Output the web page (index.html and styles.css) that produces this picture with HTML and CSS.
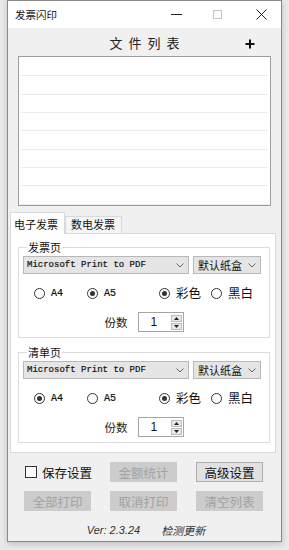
FILE: index.html
```html
<!DOCTYPE html>
<html lang="zh-CN">
<head>
<meta charset="utf-8">
<title>发票闪印</title>
<link rel="stylesheet" href="styles.css">
</head>
<body>
<div class="window">
  <div class="titlebar">
    <span class="title">发票闪印</span>
    <span class="tb-btn tb-min"><svg width="11" height="11" viewBox="0 0 11 11"><line x1="0" y1="5.5" x2="11" y2="5.5" stroke="#222" stroke-width="1"/></svg></span>
    <span class="tb-btn tb-max"><svg width="10" height="10" viewBox="0 0 10 10"><rect x="0.5" y="0.5" width="8" height="8" fill="none" stroke="#c4c4c4" stroke-width="1"/></svg></span>
    <span class="tb-btn tb-close"><svg width="11" height="11" viewBox="0 0 11 11"><path d="M0.5 0.5 L10.5 10.5 M10.5 0.5 L0.5 10.5" stroke="#222" stroke-width="1" fill="none"/></svg></span>
  </div>

  <div class="heading-row">
    <span></span>
    <span class="heading">文件列表</span>
    <span class="plus"><svg width="10" height="10" viewBox="0 0 10 10"><path d="M5 0.5 V9.5 M0.5 5 H9.5" stroke="#111" stroke-width="2" fill="none"/></svg></span>
  </div>

  <div class="filelist">
    <div class="row"></div><div class="row"></div><div class="row"></div><div class="row"></div>
    <div class="row"></div><div class="row"></div><div class="row"></div><div class="row"></div>
  </div>

  <div class="tabs">
    <span class="tab active">电子发票</span>
    <span class="tab">数电发票</span>
  </div>
  <div class="panel">
    <fieldset class="group">
      <legend>发票页</legend>
      <div class="combos">
        <div class="combo combo-printer"><span class="mono">Microsoft Print to PDF</span><svg class="chev" width="8" height="5" viewBox="0 0 8 5"><path d="M0.5 0.5 L4 4 L7.5 0.5" stroke="#666" fill="none"/></svg></div>
        <div class="combo combo-tray"><span>默认纸盒</span><svg class="chev" width="8" height="5" viewBox="0 0 8 5"><path d="M0.5 0.5 L4 4 L7.5 0.5" stroke="#666" fill="none"/></svg></div>
      </div>
      <div class="radios">
        <label class="radio"><span class="dot"></span><span class="mono-l">A4</span></label>
        <label class="radio"><span class="dot on"></span><span class="mono-l">A5</span></label>
        <label class="radio"><span class="dot on"></span><span class="cn">彩色</span></label>
        <label class="radio"><span class="dot"></span><span class="cn">黑白</span></label>
      </div>
      <div class="copies">
        <span class="copies-label">份数</span>
        <div class="spin"><span class="spin-val">1</span><span class="spin-btns"><span class="sb"><svg width="5" height="3" viewBox="0 0 5 3"><path d="M0 3 L2.5 0 L5 3 Z" fill="#222"/></svg></span><span class="sb"><svg width="5" height="3" viewBox="0 0 5 3"><path d="M0 0 L2.5 3 L5 0 Z" fill="#222"/></svg></span></span></div>
      </div>
    </fieldset>

    <fieldset class="group group2">
      <legend>清单页</legend>
      <div class="combos">
        <div class="combo combo-printer"><span class="mono">Microsoft Print to PDF</span><svg class="chev" width="8" height="5" viewBox="0 0 8 5"><path d="M0.5 0.5 L4 4 L7.5 0.5" stroke="#666" fill="none"/></svg></div>
        <div class="combo combo-tray"><span>默认纸盒</span><svg class="chev" width="8" height="5" viewBox="0 0 8 5"><path d="M0.5 0.5 L4 4 L7.5 0.5" stroke="#666" fill="none"/></svg></div>
      </div>
      <div class="radios">
        <label class="radio"><span class="dot on"></span><span class="mono-l">A4</span></label>
        <label class="radio"><span class="dot"></span><span class="mono-l">A5</span></label>
        <label class="radio"><span class="dot on"></span><span class="cn">彩色</span></label>
        <label class="radio"><span class="dot"></span><span class="cn">黑白</span></label>
      </div>
      <div class="copies">
        <span class="copies-label">份数</span>
        <div class="spin"><span class="spin-val">1</span><span class="spin-btns"><span class="sb"><svg width="5" height="3" viewBox="0 0 5 3"><path d="M0 3 L2.5 0 L5 3 Z" fill="#222"/></svg></span><span class="sb"><svg width="5" height="3" viewBox="0 0 5 3"><path d="M0 0 L2.5 3 L5 0 Z" fill="#222"/></svg></span></span></div>
      </div>
    </fieldset>
  </div>

  <div class="actions">
    <label class="check"><span class="box"></span><span>保存设置</span></label>
    <span class="btn disabled">金额统计</span>
    <span class="btn">高级设置</span>
    <span class="btn disabled">全部打印</span>
    <span class="btn disabled">取消打印</span>
    <span class="btn disabled">清空列表</span>
  </div>

  <div class="footer">
    <span class="ver">Ver: 2.3.24</span>
    <span class="update">检测更新</span>
  </div>
</div>
</body>
</html>
```

FILE: styles.css
```css
html, body {
  margin: 0;
  padding: 0;
}
body {
  background: #e9e9e9;
  font-family: "Noto Sans CJK SC", "Noto Sans", sans-serif;
  color: #000;
  width: 289px;
  height: 550px;
  overflow: hidden;
}
.window {
  margin-left: 7px;
  width: 275px;
  height: 542px;
  box-sizing: border-box;
  border: 1px solid #8a8a8a;
  background: #f0f0f0;
  box-shadow: 0 2px 6px rgba(0,0,0,0.18);
  display: flex;
  flex-direction: column;
}
.titlebar {
  height: 27px;
  background: #fff;
  display: flex;
  align-items: center;
  flex: none;
}
.title {
  font-size: 10.5px;
  line-height: 14px;
  padding-left: 7px;
  color: #111;
  flex: 1;
}
.tb-btn {
  display: flex;
  align-items: center;
  justify-content: center;
}
.tb-min { width: 11px; margin-right: 31px; }
.tb-max { width: 10px; margin-right: 33px; }
.tb-close { width: 11px; margin-right: 14px; }

.heading-row {
  display: grid;
  grid-template-columns: 1fr auto 1fr;
  align-items: center;
  height: 20px;
  margin-top: 5px;
  flex: none;
}
.heading {
  font-size: 13px;
  letter-spacing: 6px;
  padding-left: 6px;
  line-height: 20px;
  color: #222;
}
.plus {
  justify-self: end;
  padding-right: 26px;
  display: flex;
  padding-top: 2px;
}
.filelist {
  margin: 3px 0 0 10px;
  width: 253px;
  height: 150px;
  box-sizing: border-box;
  border: 1px solid #9c9c9c;
  background: #fff;
  padding: 1px 2px 0;
  flex: none;
  display: flex;
  flex-direction: column;
}
.row {
  height: 18.33px;
  box-sizing: border-box;
  border-bottom: 1px solid #ebebeb;
  flex: none;
}

.tabs {
  display: flex;
  align-items: flex-end;
  margin: 6px 0 0 2px;
  height: 21px;
  position: relative;
  z-index: 1;
  flex: none;
}
.tab {
  font-size: 11px;
  line-height: 15px;
  height: 16px;
  padding: 0 6px 0 5px;
  border: 1px solid #d9d9d9;
  border-bottom: none;
  background: #f5f5f5;
  color: #111;
}
.tab.active {
  height: 21px;
  line-height: 22px;
  background: #fff;
  padding: 0 6px 0 3px;
  border-color: #d9d9d9;
  margin-bottom: -1px;
}
.panel {
  margin-left: 2px;
  width: 266px;
  box-sizing: border-box;
  border: 1px solid #d9d9d9;
  background: #fff;
  padding: 6px 0 9px 7px;
  flex: none;
}
.group {
  margin: 0;
  width: 252px;
  box-sizing: border-box;
  border: 1px solid #dcdcdc;
  padding: 2px 4px 5px 4px;
  min-width: 0;
}
.group2 { margin-top: 7px; }
.group legend {
  font-size: 11px;
  line-height: 14px;
  padding: 0 1px;
  margin-left: 4px;
  color: #111;
}
.combos {
  display: flex;
  gap: 4px;
  height: 18px;
}
.combo {
  box-sizing: border-box;
  height: 18px;
  border: 1px solid #b8b8b8;
  background: #e5e5e5;
  display: flex;
  align-items: center;
  justify-content: space-between;
  padding: 0 4px 0 3px;
  font-size: 11px;
  color: #111;
}
.combo-printer { width: 166px; }
.combo-tray { width: 68px; padding-left: 4px; }
.mono {
  font-family: "Liberation Mono", monospace;
  font-size: 9px;
  color: #111;
  -webkit-text-stroke: 0.2px #111;
}
.chev { flex: none; }

.radios {
  display: grid;
  grid-template-columns: 53px 72px 52px auto;
  padding-left: 11px;
  margin-top: 10px;
  height: 18px;
  align-items: center;
}
.radio {
  display: flex;
  align-items: center;
  gap: 6px;
}
.dot {
  width: 11px;
  height: 11px;
  box-sizing: border-box;
  border: 1px solid #333;
  border-radius: 50%;
  background: #fff;
  display: flex;
  align-items: center;
  justify-content: center;
  flex: none;
}
.dot.on::after {
  content: "";
  width: 5px;
  height: 5px;
  border-radius: 50%;
  background: #333;
}
.mono-l {
  font-family: "Liberation Mono", monospace;
  font-size: 10px;
  color: #111;
  -webkit-text-stroke: 0.2px #111;
}
.cn {
  font-size: 12.5px;
  line-height: 16px;
  color: #111;
}
.copies {
  display: flex;
  justify-content: center;
  align-items: center;
  gap: 10px;
  margin-top: 10px;
  height: 20px;
}
.copies-label {
  font-size: 11.5px;
  color: #222;
}
.spin {
  width: 46px;
  height: 20px;
  box-sizing: border-box;
  border: 1px solid #a5a5a5;
  background: #fff;
  display: flex;
  align-items: center;
  justify-content: space-between;
  padding: 0 1px 0 12px;
}
.spin-val {
  font-family: "Liberation Sans", sans-serif;
  font-size: 12px;
  color: #111;
}
.spin-btns {
  display: flex;
  flex-direction: column;
  gap: 1px;
}
.sb {
  width: 11px;
  height: 7px;
  box-sizing: border-box;
  border: 1px solid #bdbdbd;
  background: #e8e8e8;
  display: flex;
  align-items: center;
  justify-content: center;
}

.actions {
  display: grid;
  grid-template-columns: 67px 67px 67px;
  column-gap: 19px;
  row-gap: 9px;
  padding-left: 16px;
  margin-top: 9px;
  flex: none;
}
.check {
  display: flex;
  align-items: center;
  gap: 5px;
  font-size: 12.5px;
  color: #111;
  padding-left: 1px;
  white-space: nowrap;
}
.box {
  width: 12px;
  height: 12px;
  box-sizing: border-box;
  border: 1px solid #333;
  background: #fff;
  flex: none;
}
.btn {
  height: 20px;
  box-sizing: border-box;
  display: flex;
  align-items: center;
  justify-content: center;
  font-size: 12.5px;
  border: 1px solid #adadad;
  background: #e1e1e1;
  color: #111;
}
.btn.disabled {
  background: #cccccc;
  border-color: #cccccc;
  color: #a2a2a2;
}
.footer {
  display: flex;
  justify-content: center;
  align-items: center;
  gap: 21px;
  margin-top: 11px;
  height: 16px;
  padding-left: 3px;
  flex: none;
}
.ver {
  font-family: "Liberation Sans", sans-serif;
  font-style: italic;
  font-size: 11px;
  color: #333;
}
.update {
  font-style: italic;
  font-size: 11px;
  color: #333;
}
```
